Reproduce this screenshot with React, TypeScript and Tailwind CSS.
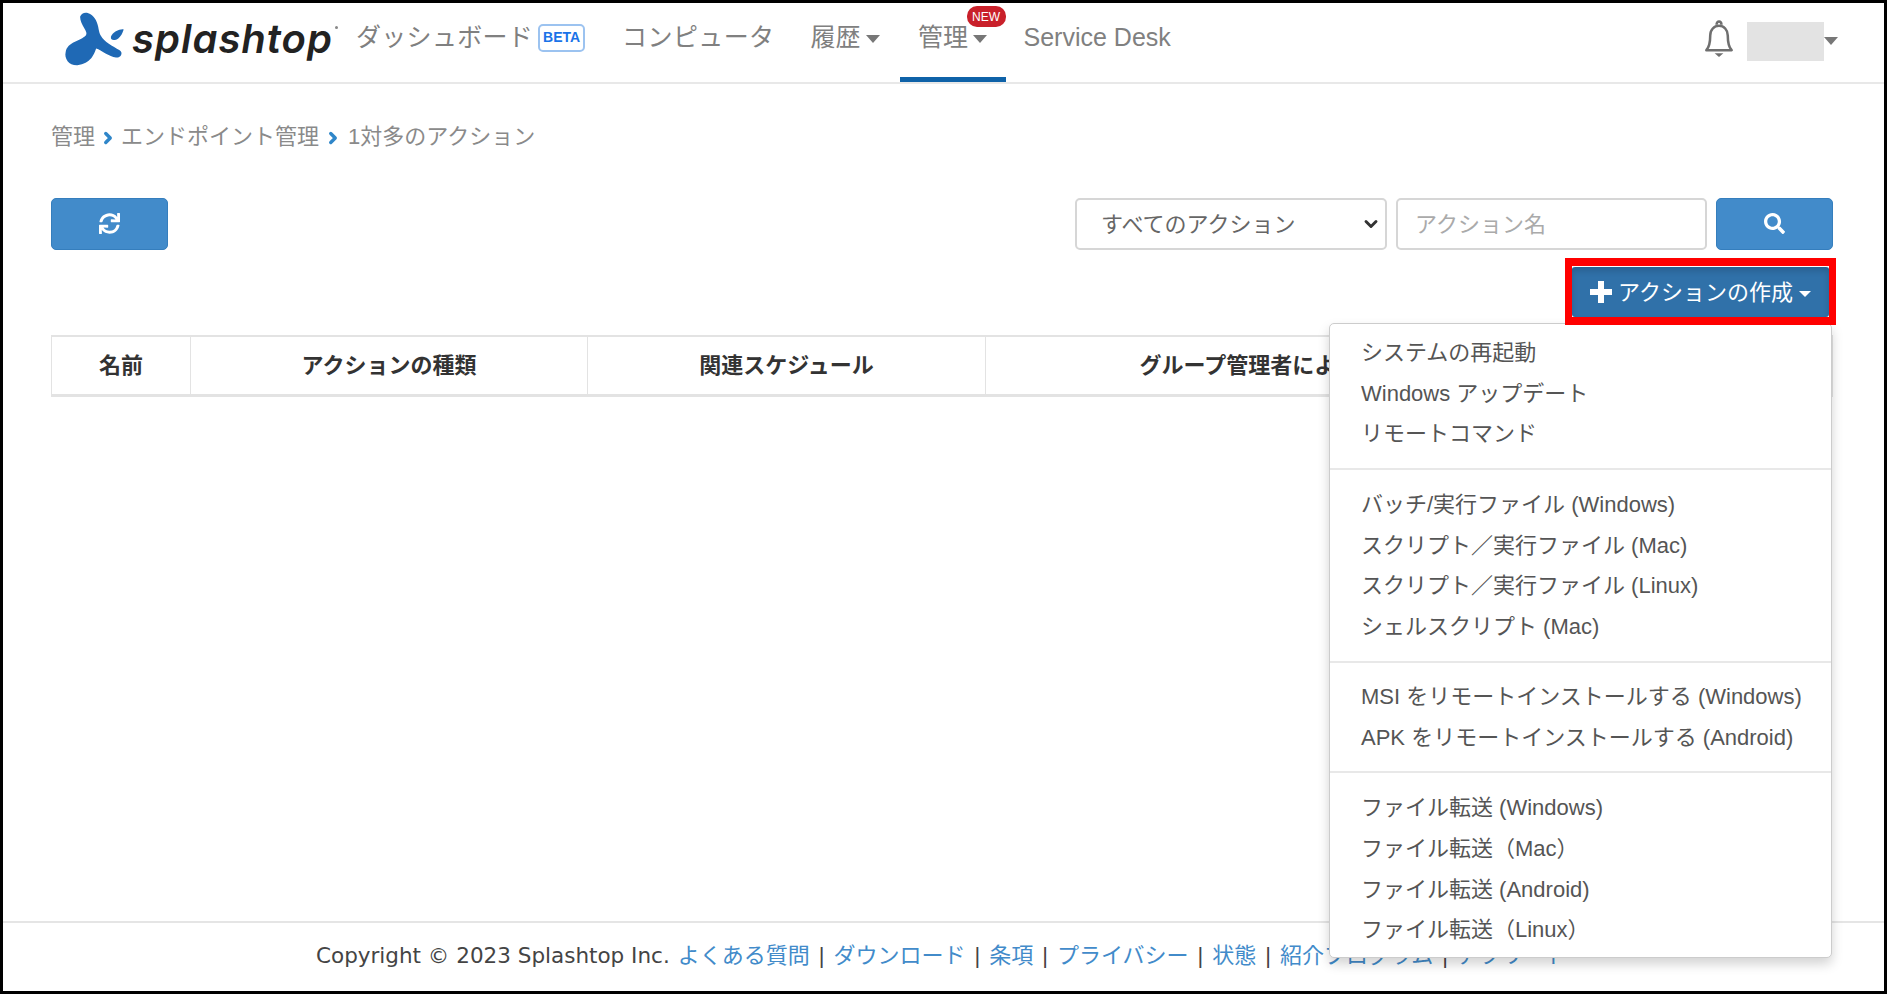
import React from "react";
import { FaSync, FaSearch } from "react-icons/fa";
import { ChevronDown, ChevronRight } from "lucide-react";

const Caret = () => (
  <span className="ml-[5px] mt-[2px] inline-block h-0 w-0 border-x-[7px] border-t-[8px] border-x-transparent border-t-[#777]" />
);

const groups: string[][] = [
  ["システムの再起動", "Windows アップデート", "リモートコマンド"],
  [
    "バッチ/実行ファイル (Windows)",
    "スクリプト\uFF0F実行ファイル (Mac)",
    "スクリプト\uFF0F実行ファイル (Linux)",
    "シェルスクリプト (Mac)",
  ],
  ["MSI をリモートインストールする (Windows)", "APK をリモートインストールする (Android)"],
  ["ファイル転送 (Windows)", "ファイル転送\uFF08Mac\uFF09", "ファイル転送 (Android)", "ファイル転送\uFF08Linux\uFF09"],
];

const footerLinks = ["よくある質問", "ダウンロード", "条項", "プライバシー", "状態", "紹介プログラム", "アフリート"];

export default function App() {
  return (
    <div className="flex h-[994px] w-full flex-col overflow-hidden border-[3px] border-black bg-white [font-family:'Liberation_Sans','Noto_Sans_CJK_JP',sans-serif] text-[22px] text-[#666]">
      <header className="flex h-[81px] shrink-0 items-stretch border-b-2 border-[#e8e8e8] text-[25px] text-[#808080]">
        <div className="relative flex w-[353px] shrink-0 items-start pl-[61px] pt-[7px]">
          <svg viewBox="70 30 185 170" className="h-[57px] w-[62px] shrink-0">
            <path
              fill="#1f69b5"
              d="M118 50 C125 32 150 34 165 60 C175 80 172 95 180 107 C190 125 215 138 236 150 C247 157 241 173 225 172 C205 170 182 150 166 145 C160 162 150 190 110 195 C85 196 70 175 75 155 C80 125 120 122 135 106 C145 95 118 75 118 50 Z"
            />
            <path fill="#1f69b5" d="M248 88 C240 85 214 95 210 110 C208 122 222 122 232 115 C240 108 245 98 248 88 Z" />
          </svg>
          <span className="ml-[6px] mt-[6px] text-[40px] font-semibold italic leading-[46px] tracking-[1px] text-[#222] [font-family:'Inter',sans-serif]">
            splashtop
          </span>
          <span className="absolute left-[332px] top-[23px] h-[3px] w-[3px] rounded-full bg-[#888]" />
        </div>
        <div className="flex items-center pb-[10px] tracking-[0.3px]">
          <span>ダッシュボード</span>
          <span className="ml-[5px] flex h-[28px] w-[47px] items-center justify-center rounded-[5px] border-2 border-[#9cc3f0] text-[14px] font-bold tracking-normal text-[#1a73e8]">
            BETA
          </span>
        </div>
        <div className="ml-[37px] flex items-center pb-[10px] tracking-[0.4px]">コンピュータ</div>
        <div className="ml-[36px] flex items-center pb-[10px]">
          履歴
          <Caret />
        </div>
        <div className="relative ml-[20px] flex w-[106px] items-center justify-center pb-[10px]">
          管理
          <Caret />
          <span className="absolute right-0 top-[3px] flex h-[21px] w-[39px] items-center justify-center rounded-[10px] bg-[#c9202a] text-[12px] text-white">
            NEW
          </span>
          <span className="absolute bottom-0 left-0 h-[5px] w-full bg-[#0f62a8]" />
        </div>
        <div className="ml-[18px] flex items-center pb-[10px]">Service Desk</div>
        <div className="ml-auto flex items-start pr-[46px]">
          <svg viewBox="0 0 32 40" className="mt-[16px] h-[39px] w-[32px]" fill="none" stroke="#6f6f6f" strokeWidth="2.6">
            <path d="M3 32 C7 28 7 22 7 17 C7 11 11 7 16 7 C21 7 25 11 25 17 C25 22 25 28 29 32 Z" strokeLinejoin="round" />
            <path d="M13.5 6 C13.5 1.5 18.5 1.5 18.5 6" />
            <path d="M11.5 35 H20.5 L16 39 Z" fill="#6f6f6f" stroke="none" />
          </svg>
          <span className="ml-[12px] mt-[19px] h-[39px] w-[77px] bg-[#e3e3e3]" />
          <span className="mt-[34px] h-0 w-0 border-x-[7px] border-t-[8px] border-x-transparent border-t-[#777]" />
        </div>
      </header>

      <main className="flex-1 pl-[48px] pr-[51px]">
        <nav className="flex h-[114px] items-start pt-[37px] text-[#8a8a8a]">
          <span className="leading-[32px]">管理</span>
          <ChevronRight className="ml-[4px] mr-[4px] mt-[8px] h-[18px] w-[18px] text-[#2f86c9]" strokeWidth={4.5} />
          <span className="leading-[32px]">エンドポイント管理</span>
          <ChevronRight className="ml-[5px] mr-[6px] mt-[8px] h-[18px] w-[18px] text-[#2f86c9]" strokeWidth={4.5} />
          <span className="leading-[32px]">1対多のアクション</span>
        </nav>

        <div className="flex h-[52px] items-stretch">
          <button className="flex w-[117px] items-center justify-center rounded-[5px] border border-[#357ebd] bg-[#428bca] text-white">
            <FaSync className="mb-[2px] h-[21px] w-[21px]" />
          </button>
          <div className="relative ml-auto w-[312px]">
            <select className="h-full w-full appearance-none rounded-[5px] border-2 border-[#d6d6d6] bg-white pl-[24px] text-[22px] text-[#666] outline-none">
              <option>すべてのアクション</option>
            </select>
            <ChevronDown className="pointer-events-none absolute right-[6px] top-[16px] h-[20px] w-[20px] text-[#333]" strokeWidth={3.5} />
          </div>
          <input
            placeholder="アクション名"
            className="ml-[9px] w-[311px] rounded-[5px] border-2 border-[#d6d6d6] bg-white pl-[17px] text-[22px] outline-none placeholder:text-[#aaa]"
          />
          <button className="ml-[9px] flex w-[117px] items-center justify-center rounded-[5px] border border-[#357ebd] bg-[#428bca] text-white">
            <FaSearch className="mb-[2px] h-[21px] w-[21px]" />
          </button>
        </div>

        <div className="relative mt-[8px] flex h-[67px] justify-end">
          <div className="relative z-20 mr-[-3px] border-x-[7px] border-y-[8px] border-[#ff0000]">
            <button className="flex h-[51px] w-[257px] items-center rounded-[3px] border-t border-white bg-[#3071a9] pl-[18px] text-[22px] text-white shadow-[inset_0_4px_6px_rgba(0,0,0,0.15)]">
              <svg viewBox="0 0 22 22" className="h-[22px] w-[22px] shrink-0" fill="white">
                <path d="M8 0 H14 V8 H22 V14 H14 V22 H8 V14 H0 V8 H8 Z" />
              </svg>
              <span className="ml-[6px]">アクションの作成</span>
              <span className="ml-[6px] mt-[3px] h-0 w-0 border-x-[6px] border-t-[6px] border-x-transparent border-t-white" />
            </button>
          </div>

          <div className="absolute right-[1px] top-[65px] z-10 w-[503px] rounded-[5px] border border-[#ccc] bg-white pb-[6px] pt-[9px] text-[#555] shadow-[0_6px_12px_rgba(0,0,0,0.175)]">
            {groups.map((g, i) => (
              <div key={i}>
                {i > 0 && <div className={i === 2 ? "mb-[14px] mt-[13px] h-[2px] bg-[#e8e8e8]" : "mb-[15px] mt-[13px] h-[2px] bg-[#e8e8e8]"} />}
                {g.map((t) => (
                  <div key={t} className="h-[40.7px] pl-[31px] leading-[40.7px] whitespace-nowrap">
                    {t}
                  </div>
                ))}
              </div>
            ))}
          </div>
        </div>

        <table className="mt-[10px] w-full table-fixed border-collapse border-t-2 border-b-[3px] border-[#e3e3e3] text-center text-[22px] font-bold text-[#333]">
          <thead>
            <tr className="h-[59px]">
              <th className="w-[139px] border-x border-[#e3e3e3] font-bold">名前</th>
              <th className="w-[397px] border-x border-[#e3e3e3] font-bold">アクションの種類</th>
              <th className="w-[398px] border-x border-[#e3e3e3] font-bold">関連スケジュール</th>
              <th className="w-[570px] border-x border-[#e3e3e3] font-bold">グループ管理者による実行</th>
              <th className="border-x border-[#e3e3e3] font-bold">操作</th>
            </tr>
          </thead>
        </table>
      </main>

      <footer className="flex h-[70px] shrink-0 items-start justify-center border-t-2 border-[#e5e5e5] pr-[4px] pt-[17px] leading-[32px] text-[#444]">
        <span className="mr-[8px] [font-family:'DejaVu_Sans','Noto_Sans_CJK_JP',sans-serif] text-[21.5px]">Copyright © 2023 Splashtop Inc.</span>
        {footerLinks.map((l, i) => (
          <React.Fragment key={l}>
            {i > 0 && <span className="mx-[9px] text-[#444]">|</span>}
            <span className="text-[#428bca]">{l}</span>
          </React.Fragment>
        ))}
      </footer>
    </div>
  );
}
